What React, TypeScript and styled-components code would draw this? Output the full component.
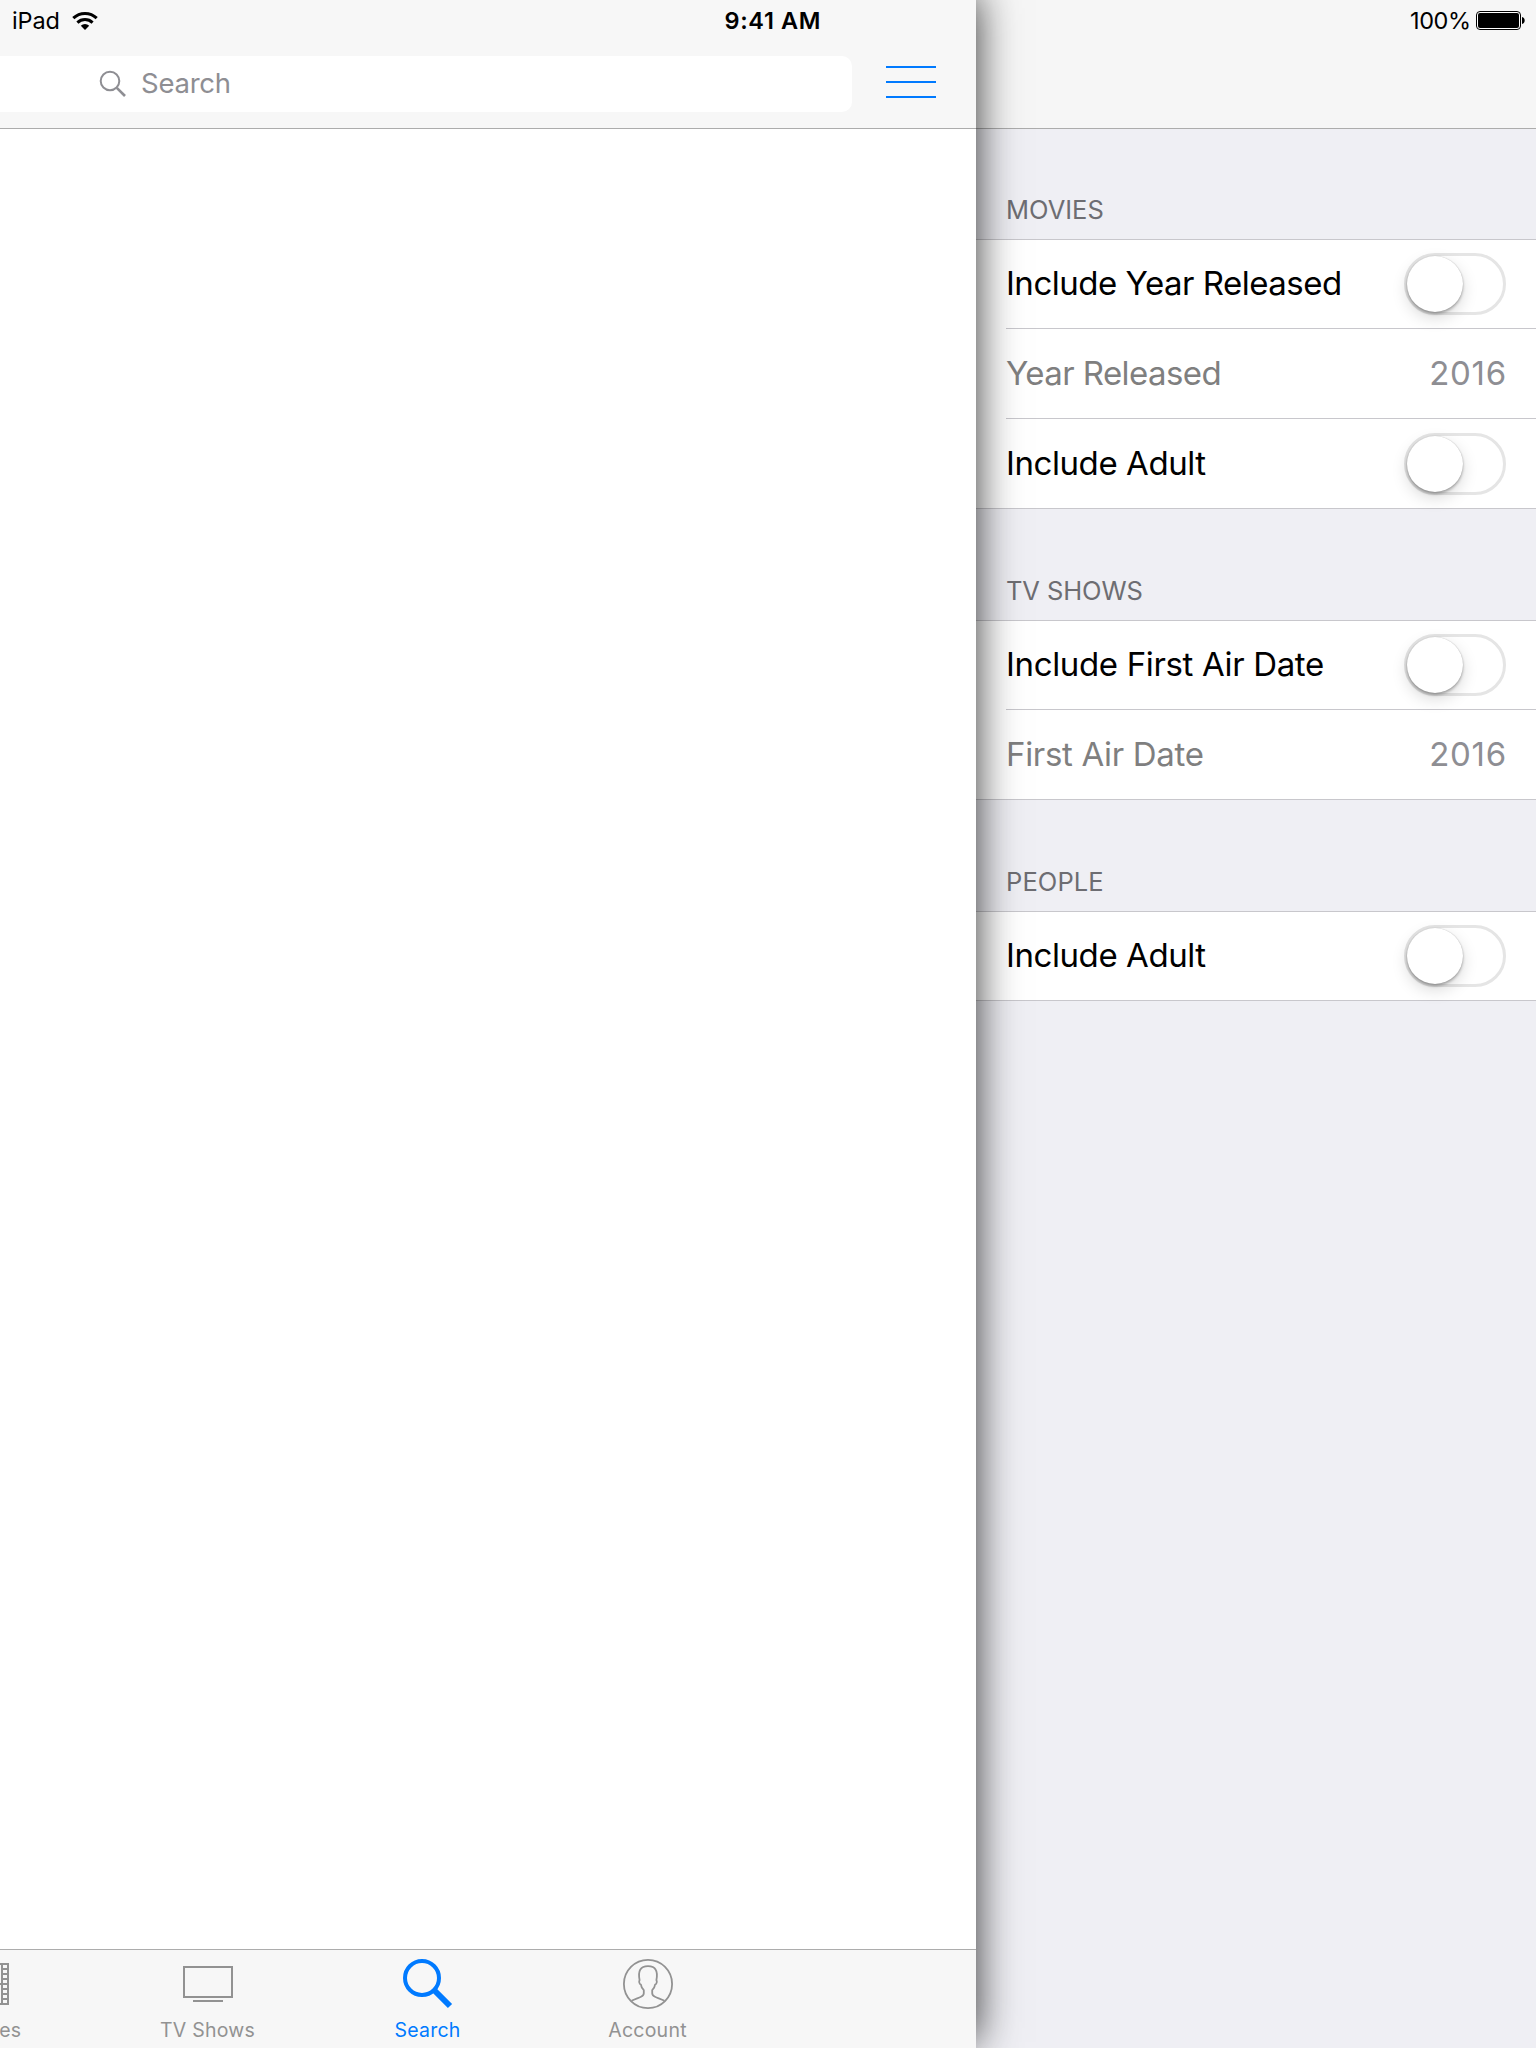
import React from "react";
import styled, { createGlobalStyle } from "styled-components";

const GlobalStyle = createGlobalStyle`
  * { box-sizing: border-box; }
  body { margin: 0; background: #efeff4; }
`;

const Screen = styled.div`
  display: grid;
  grid-template-columns: 976px 560px;
  width: 1536px;
  height: 2048px;
  overflow: hidden;
  background: #efeff4;
  color: #000;
  font-family: Inter, "Liberation Sans", sans-serif;
  -webkit-font-smoothing: antialiased;
  font-kerning: normal;
`;

const MainPanel = styled.main`
  position: relative;
  z-index: 1;
  display: flex;
  flex-direction: column;
  height: 2048px;
  background: #fff;
  box-shadow: 0 -6px 40px rgba(0, 0, 0, 0.8);
`;

const FilterPanel = styled.aside`
  display: flex;
  flex-direction: column;
  background: #efeff4;
`;

const NavBar = styled.header`
  height: 129px;
  flex: none;
  background: #f7f7f7;
  border-bottom: 1px solid #acacac;
`;

const SideNavBar = styled(NavBar)`
  background: #f6f6f6;
`;

const StatusBar = styled.div<{ $side?: boolean }>`
  display: flex;
  align-items: center;
  justify-content: ${(p) => (p.$side ? "flex-end" : "flex-start")};
  height: 41px;
  padding: ${(p) => (p.$side ? "0 10px 0 0" : "0 0 0 12px")};
`;

const StatusText = styled.span<{ $width: number; $spacing: number; $bold?: boolean }>`
  width: ${(p) => p.$width}px;
  font-size: 23.5px;
  line-height: 41px;
  font-weight: ${(p) => (p.$bold ? 600 : 400)};
  letter-spacing: ${(p) => p.$spacing}px;
  white-space: nowrap;
`;

const WifiIcon = styled.svg`
  width: 26px;
  height: 20px;
  margin: 0 627px 0 11.5px;
`;

const BatteryIcon = styled.svg`
  width: 50px;
  height: 19px;
`;

const SearchRow = styled.div`
  display: flex;
  align-items: center;
  padding-top: 15px;
`;

const SearchField = styled.div`
  display: flex;
  align-items: center;
  width: 852px;
  height: 56px;
  padding-left: 99px;
  border-radius: 0 10px 10px 0;
  background: #fff;
`;

const FieldIcon = styled.svg`
  width: 28px;
  height: 28px;
`;

const Placeholder = styled.span`
  margin: -3px 0 0 14px;
  color: #8e8e93;
  font-size: 27.5px;
  line-height: 34px;
  letter-spacing: -0.25px;
`;

const MenuButton = styled.button`
  display: flex;
  flex-direction: column;
  gap: 13px;
  width: 50px;
  margin: -4px 0 0 34px;
  padding: 0;
  border: 0;
  background: none;
`;

const MenuLine = styled.span`
  height: 2px;
  background: #007aff;
`;

const Results = styled.section`
  flex: 1;
`;

const TabBar = styled.nav`
  display: flex;
  flex: none;
  height: 99px;
  overflow: hidden;
  border-top: 1px solid #acacac;
  background: #f7f7f7;
`;

const Tab = styled.div<{ $active?: boolean; $first?: boolean }>`
  display: flex;
  flex: none;
  flex-direction: column;
  align-items: center;
  width: 220px;
  margin-left: ${(p) => (p.$first ? -122 : 0)}px;
  padding-top: 9px;
  color: ${(p) => (p.$active ? "#007aff" : "#929292")};
`;

const TabIcon = styled.svg`
  width: 50px;
  height: 50px;
`;

const TabLabel = styled.span`
  margin: 9px 1px 0 0;
  font-size: 19.5px;
  line-height: 24px;
  letter-spacing: 0.25px;
`;

const GroupTitle = styled.h2<{ $first?: boolean; $spacing: number }>`
  margin: 0;
  height: ${(p) => (p.$first ? 110 : 111)}px;
  padding: ${(p) => (p.$first ? 65 : 66)}px 0 0 30px;
  color: #6d6d72;
  font-size: 25.5px;
  font-weight: 400;
  line-height: 32px;
  letter-spacing: ${(p) => p.$spacing}px;
`;

const Group = styled.div`
  border-top: 1px solid #c8c7cc;
  border-bottom: 1px solid #c8c7cc;
  background: #fff;
`;

const Row = styled.div<{ $first: boolean }>`
  display: flex;
  align-items: center;
  justify-content: space-between;
  height: ${(p) => (p.$first ? 88 : 90)}px;
  margin-left: 30px;
  padding-right: 30px;
  border-top: ${(p) => (p.$first ? "0" : "1px solid #c8c7cc")};
`;

const RowLabel = styled.span<{ $muted?: boolean; $spacing: number }>`
  margin-bottom: 2px;
  color: ${(p) => (p.$muted ? "#7f7f7f" : "#000")};
  font-size: 33px;
  line-height: 42px;
  letter-spacing: ${(p) => p.$spacing}px;
  white-space: nowrap;
`;

const RowValue = styled.span`
  margin: 0 -1px 2px 0;
  color: #8e8e93;
  font-size: 33px;
  line-height: 42px;
  letter-spacing: 0.75px;
`;

const Toggle = styled.div`
  width: 102px;
  height: 62px;
  border: 3px solid #e5e5e5;
  border-radius: 31px;
  background: #fff;
`;

const Knob = styled.div`
  width: 56px;
  height: 56px;
  border-radius: 50%;
  background: #fff;
  box-shadow: 0 0 1px rgba(0, 0, 0, 0.25), 0 2px 3px rgba(0, 0, 0, 0.28), 0 6px 16px rgba(0, 0, 0, 0.15);
`;

type RowData = { label: string; spacing: number; value?: string };
type GroupData = { title: string; spacing: number; rows: RowData[] };

const groups: GroupData[] = [
  {
    title: "MOVIES",
    spacing: 0,
    rows: [
      { label: "Include Year Released", spacing: -0.49 },
      { label: "Year Released", spacing: -0.58, value: "2016" },
      { label: "Include Adult", spacing: -0.42 },
    ],
  },
  {
    title: "TV SHOWS",
    spacing: -0.1,
    rows: [
      { label: "Include First Air Date", spacing: -0.35 },
      { label: "First Air Date", spacing: -0.32, value: "2016" },
    ],
  },
  {
    title: "PEOPLE",
    spacing: 0.1,
    rows: [{ label: "Include Adult", spacing: -0.42 }],
  },
];

const filmHoles = [0, 1, 2, 3, 4, 5, 6];

function FilmIcon() {
  return (
    <TabIcon viewBox="0 0 50 50" fill="none" stroke="currentColor" strokeWidth="2">
      <path d="M5 5H45V45H5ZM11 4V46M39 4V46M11 25H39" />
      {filmHoles.map((n) => (
        <path key={n} d={`M5 ${10 + n * 5}H11M39 ${10 + n * 5}H45`} />
      ))}
    </TabIcon>
  );
}

function TvIcon() {
  return (
    <TabIcon viewBox="0 0 50 50" fill="none" stroke="currentColor" strokeWidth="2">
      <path d="M1 8H49V38H1ZM10 42H40" />
    </TabIcon>
  );
}

function LensIcon() {
  return (
    <TabIcon viewBox="0 0 50 50" fill="none" stroke="currentColor">
      <circle cx="19" cy="19" r="17" strokeWidth="4" />
      <path d="M30.5 30.5L47 47" strokeWidth="6" />
    </TabIcon>
  );
}

function AccountIcon() {
  return (
    <TabIcon viewBox="0 0 50 50" fill="none" stroke="currentColor" strokeWidth="1.8" strokeLinejoin="round">
      <circle cx="25" cy="25" r="24.1" />
      <path d="M8.5 41.8C11.5 40 15 39.2 18 37.8C20 36.9 20.8 35.8 20.8 34.2V31.2C18.8 29.4 18.2 27.6 17.9 25.6C16.3 25.2 15.7 22.2 16.6 21.2C15.9 17.6 15.7 13.4 17.2 10.8C19 7.8 22 7.2 25 7.2C29 7.2 31.3 8.2 32.7 10.8C34.3 13.4 34.1 17.6 33.4 21.2C34.3 22.2 33.7 25.2 32.1 25.6C31.8 27.6 31.2 29.4 29.2 31.2V34.2C29.2 35.8 30 36.9 32 37.8C35 39.2 38.5 40 41.5 41.8" />
    </TabIcon>
  );
}

export default function App() {
  return (
    <>
      <GlobalStyle />
      <Screen>
        <MainPanel>
          <NavBar>
            <StatusBar>
              <StatusText $width={48} $spacing={-0.1}>iPad</StatusText>
              <WifiIcon viewBox="0 0 26 20" fill="none" stroke="#000" strokeWidth="3">
                <path d="M1.3 7.2A16.8 16.8 0 0 1 24.7 7.2" />
                <path d="M5.4 11.6A11 11 0 0 1 20.6 11.6" />
                <path d="M13 19L8.8 14.7A6.2 6.2 0 0 1 17.2 14.7Z" fill="#000" stroke="none" />
              </WifiIcon>
              <StatusText $width={100} $spacing={0.65} $bold>9:41 AM</StatusText>
            </StatusBar>
            <SearchRow>
              <SearchField>
                <FieldIcon viewBox="0 0 28 28" fill="none" stroke="#8e8e93" strokeWidth="2">
                  <circle cx="11" cy="11" r="9.3" />
                  <path d="M17.8 17.8L26 26" strokeWidth="2.6" />
                </FieldIcon>
                <Placeholder>Search</Placeholder>
              </SearchField>
              <MenuButton aria-label="Filters">
                <MenuLine />
                <MenuLine />
                <MenuLine />
              </MenuButton>
            </SearchRow>
          </NavBar>
          <Results />
          <TabBar>
            <Tab $first>
              <FilmIcon />
              <TabLabel>Movies</TabLabel>
            </Tab>
            <Tab>
              <TvIcon />
              <TabLabel>TV Shows</TabLabel>
            </Tab>
            <Tab $active>
              <LensIcon />
              <TabLabel>Search</TabLabel>
            </Tab>
            <Tab>
              <AccountIcon />
              <TabLabel>Account</TabLabel>
            </Tab>
          </TabBar>
        </MainPanel>
        <FilterPanel>
          <SideNavBar>
            <StatusBar $side>
              <StatusText $width={66} $spacing={-0.4}>100%</StatusText>
              <BatteryIcon viewBox="0 0 50 19">
                <rect x="0.5" y="0.5" width="44" height="18" rx="3.5" fill="#fff" stroke="#000" />
                <rect x="2" y="2" width="41" height="15" rx="2" fill="#000" />
                <path d="M46 6C49.6 6.5 49.6 12.5 46 13Z" fill="#000" />
              </BatteryIcon>
            </StatusBar>
          </SideNavBar>
          {groups.map((group, g) => (
            <React.Fragment key={group.title}>
              <GroupTitle $first={g === 0} $spacing={group.spacing}>{group.title}</GroupTitle>
              <Group>
                {group.rows.map((row, r) => (
                  <Row key={row.label} $first={r === 0}>
                    <RowLabel $muted={!!row.value} $spacing={row.spacing}>{row.label}</RowLabel>
                    {row.value ? (
                      <RowValue>{row.value}</RowValue>
                    ) : (
                      <Toggle role="switch" aria-checked={false}>
                        <Knob />
                      </Toggle>
                    )}
                  </Row>
                ))}
              </Group>
            </React.Fragment>
          ))}
        </FilterPanel>
      </Screen>
    </>
  );
}
